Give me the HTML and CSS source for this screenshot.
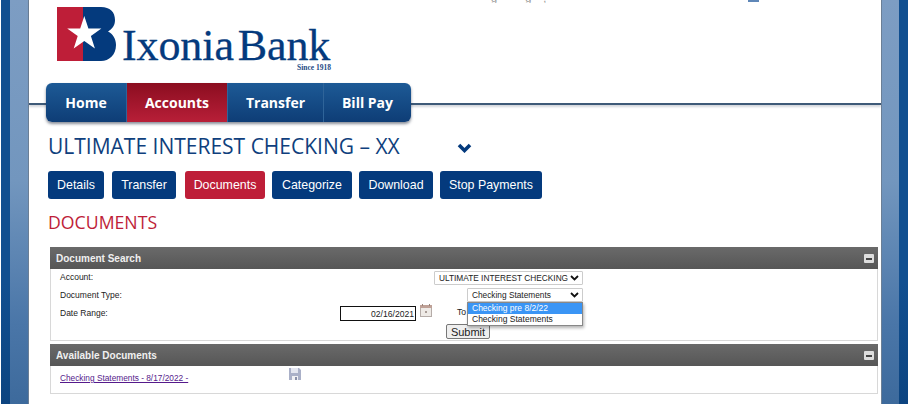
FILE: index.html
```html
<!DOCTYPE html>
<html lang="en">
<head>
  <meta charset="UTF-8" />
  <title>Ixonia Bank - Documents</title>
  <link rel="stylesheet" href="styles.css">
</head>
<body>
  <div class="page">
    <div class="rail-dark rail-left"></div>
    <div class="rail-light rail-light-left"></div>

    <div class="sheet">
      <!-- Header -->
      <header class="site-header">
        <div class="util-row">
          <span class="util-text">g</span>
          <span class="util-text">g</span>
          <span class="util-text util-comma">,</span>
          <span class="util-icon"></span>
        </div>
        <div class="logo">
          <svg class="logo-mark" width="60" height="54" viewBox="0 0 60 54">
            <rect x="0" y="0" width="26" height="54" fill="#be1e38"></rect>
            <path d="M26 0H44C53 0 58 5 58 13C58 19 55 22 51 24.5C56 27 59 32 59 38C59 48 52 54 44 54H26Z" fill="#043a7d"></path>
            <path d="M27.3 9L31.4 21.4H44.4L33.9 29.1L37.9 41.6L27.3 33.9L16.7 41.6L20.7 29.1L10.2 21.4H23.2Z" fill="#fff"></path>
          </svg>
          <div class="logo-text">
            <div class="logo-name">Ixonia Bank</div>
            <div class="logo-since">Since 1918</div>
          </div>
        </div>
        <nav class="main-nav">
          <a class="nav-item nav-home">Home</a>
          <a class="nav-item nav-accounts active">Accounts</a>
          <a class="nav-item nav-transfer">Transfer</a>
          <a class="nav-item nav-billpay">Bill Pay</a>
        </nav>
      </header>

      <!-- Main Content -->
      <main class="content">
        <div class="account-title">
          <h1>ULTIMATE INTEREST CHECKING – XX</h1>
          <svg class="title-chevron" width="15" height="10" viewBox="0 0 15 10">
            <path d="M2 2L7.5 7.5L13 2" fill="none" stroke="#043a7d" stroke-width="3.6"></path>
          </svg>
        </div>

        <div class="tabs">
          <a class="tab tab-details">Details</a>
          <a class="tab tab-transfer">Transfer</a>
          <a class="tab tab-documents active">Documents</a>
          <a class="tab tab-categorize">Categorize</a>
          <a class="tab tab-download">Download</a>
          <a class="tab tab-stop">Stop Payments</a>
        </div>

        <h2>DOCUMENTS</h2>

        <section class="panel panel-search">
          <div class="panel-header">
            <span>Document Search</span>
            <span class="collapse-btn"></span>
          </div>
          <div class="panel-body">
            <div class="form-row row-account">
              <label class="field-label label-account">Account:</label>
              <div class="fake-select select-account">
                <span>ULTIMATE INTEREST CHECKING</span>
                <svg class="select-arrow" width="9" height="6" viewBox="0 0 9 6"><path d="M1 1L4.5 4.5L8 1" fill="none" stroke="#111" stroke-width="1.8"></path></svg>
              </div>
            </div>
            <div class="form-row row-type">
              <label class="field-label label-type">Document Type:</label>
              <div class="type-wrap">
                <div class="fake-select select-type">
                  <span>Checking Statements</span>
                  <svg class="select-arrow" width="9" height="6" viewBox="0 0 9 6"><path d="M1 1L4.5 4.5L8 1" fill="none" stroke="#111" stroke-width="1.8"></path></svg>
                </div>
                <ul class="dropdown">
                  <li class="selected">Checking pre 8/2/22</li>
                  <li>Checking Statements</li>
                </ul>
              </div>
            </div>
            <div class="form-row row-date">
              <label class="field-label label-date">Date Range:</label>
              <div class="date-input">02/16/2021</div>
              <svg class="calendar-icon" width="12" height="13" viewBox="0 0 12 13">
                <rect x="0.5" y="1.5" width="11" height="11" fill="#eeeae6" stroke="#b5aca8"></rect>
                <rect x="0" y="1" width="12" height="3" fill="#bfa197"></rect>
                <rect x="2" y="0" width="1" height="2" fill="#9a8378"></rect>
                <rect x="9" y="0" width="1" height="2" fill="#9a8378"></rect>
                <rect x="5" y="7" width="2" height="2" fill="#a89c96"></rect>
              </svg>
              <span class="to-label">To</span>
            </div>
            <div class="form-row row-submit">
              <button class="submit-btn">Submit</button>
            </div>
          </div>
        </section>

        <section class="panel panel-results">
          <div class="panel-header">
            <span>Available Documents</span>
            <span class="collapse-btn"></span>
          </div>
          <div class="panel-body results-body">
            <a class="doc-link">Checking Statements - 8/17/2022 -</a>
            <svg class="save-icon" width="12" height="12" viewBox="0 0 12 12">
              <path d="M0 0H10L12 2V12H0Z" fill="#aab0c8"></path>
              <rect x="2" y="0" width="7" height="5" fill="#e4e6f0"></rect>
              <rect x="3" y="8" width="6" height="4" fill="#f0f0f4"></rect>
              <rect x="6" y="9" width="2" height="3" fill="#8a90a8"></rect>
            </svg>
          </div>
        </section>
      </main>
    </div>

    <div class="rail-light rail-light-right"></div>
    <div class="rail-dark rail-right"></div>
  </div>
</body>
</html>
```

FILE: styles.css
```css
:root {
  --navy: #043a7d;
  --red: #be1e38;
  --panel-border: #d8d8d8;
}

* {
  box-sizing: border-box;
  margin: 0;
  padding: 0;
}

html, body {
  height: 404px;
  overflow: hidden;
}

body {
  font-family: 'Liberation Sans', Arial, sans-serif;
  background-color: #fff;
  color: #222;
}

.page {
  display: flex;
  width: 908px;
  height: 404px;
  overflow: hidden;
}

/* Side rails */
.rail-dark {
  width: 9px;
  background: linear-gradient(to bottom, #114f90 0%, #114f90 70%, #0c4480 100%);
}

.rail-left {
  margin-left: 1px;
}

.rail-light {
  width: 19px;
  background: linear-gradient(to bottom, #7d9dc3 0%, #7296be 45%, #4a76a8 80%, #3d6a9c 100%);
}

.rail-light-left {
  border-right: 1px solid #6b7f96;
}

.rail-light-right {
  width: 18px;
  border-left: 1px solid #6b7f96;
}

.sheet {
  width: 852px;
  background-color: #fff;
}

/* Header */
.site-header {
  height: 105px;
  border-bottom: 2px solid #3e5a78;
  box-shadow: 0 2px 2px rgba(80, 90, 110, 0.25);
}

.util-row {
  display: flex;
  height: 3px;
  overflow: hidden;
  padding-left: 462px;
  font-size: 11px;
  line-height: 3px;
  color: #999;
}

.util-text {
  margin-right: 28px;
  margin-top: -3px;
}

.util-comma {
  margin-left: -16px;
}

.util-icon {
  width: 11px;
  height: 2px;
  margin-left: 174px;
  background-color: #5f87b8;
}

.logo {
  display: flex;
  height: 67px;
  margin: 4px 0 0 28px;
}

.logo-mark {
  flex-shrink: 0;
}

.logo-text {
  margin: 18px 0 0 5px;
  width: 209px;
}

.logo-name {
  height: 39px;
  font-family: 'Liberation Serif', 'Times New Roman', serif;
  font-size: 44px;
  line-height: 42px;
  color: var(--navy);
  word-spacing: -7px;
  letter-spacing: -0.1px;
  white-space: nowrap;
  -webkit-text-stroke: 0.3px var(--navy);
}

.logo-since {
  font-family: 'Liberation Serif', 'Times New Roman', serif;
  font-size: 7.5px;
  font-weight: bold;
  line-height: 8px;
  text-align: right;
  color: #1d4a85;
}

.main-nav {
  display: flex;
  width: 365px;
  height: 39px;
  margin: 9px 0 0 17px;
  border-radius: 6px;
  overflow: hidden;
  background: linear-gradient(to bottom, #1d5a96, #0e3d76);
  box-shadow: 0 2px 3px rgba(40, 50, 70, 0.55);
  position: relative;
}

.nav-item {
  display: flex;
  align-items: center;
  justify-content: center;
  font-family: 'Open Sans', sans-serif;
  font-size: 14px;
  font-weight: 700;
  color: #fff;
  border-right: 1px solid #2f6499;
}

.nav-home { width: 81px; }
.nav-accounts { width: 101px; }
.nav-transfer { width: 96px; }
.nav-billpay { width: 87px; border-right: none; }

.nav-item.active {
  background: linear-gradient(to bottom, #8b0d20, #b81f38);
}

/* Main Content */
.content {
  padding: 28px 0 0 19px;
}

.account-title {
  display: flex;
  align-items: center;
  height: 26px;
}

h1 {
  width: 409px;
  font-family: 'Open Sans', sans-serif;
  font-size: 21px;
  font-weight: 400;
  color: #0f3f7d;
  white-space: nowrap;
}

.title-chevron {
  margin-top: 4px;
}

.tabs {
  display: flex;
  margin-top: 12px;
}

.tab {
  display: flex;
  align-items: center;
  justify-content: center;
  height: 28px;
  font-size: 12.4px;
  color: #fff;
  background-color: var(--navy);
  border-radius: 3px;
}

.tab.active {
  background-color: var(--red);
}

.tab-details { width: 56px; margin-right: 8px; }
.tab-transfer { width: 64px; margin-right: 9px; }
.tab-documents { width: 80px; margin-right: 7px; }
.tab-categorize { width: 80px; margin-right: 7px; }
.tab-download { width: 74px; margin-right: 7px; }
.tab-stop { width: 102px; }

h2 {
  margin-top: 11px;
  font-family: 'Open Sans', sans-serif;
  font-size: 17.7px;
  font-weight: 400;
  line-height: 24px;
  color: var(--red);
}

.panel {
  width: 828px;
  margin-left: 2px;
  border: 1px solid var(--panel-border);
  border-top: none;
}

.panel-search {
  height: 94px;
  margin-top: 13px;
}

.panel-results {
  height: 50px;
  margin-top: 3px;
}

.panel-header {
  display: flex;
  align-items: center;
  justify-content: space-between;
  height: 22px;
  padding: 0 4px 0 6px;
  font-size: 10px;
  font-weight: bold;
  color: #f0f0f0;
  background: linear-gradient(to bottom, #6a6a6a, #565656);
  margin: 0 -1px;
}

.collapse-btn {
  position: relative;
  width: 10px;
  height: 9px;
  background-color: #ddd;
  border-radius: 1px;
}

.collapse-btn::after {
  content: '';
  position: absolute;
  left: 2px;
  top: 4px;
  width: 6px;
  height: 2px;
  background-color: #444;
}

.panel-body {
  font-size: 8.5px;
  color: #222;
}

.form-row {
  display: flex;
  align-items: flex-start;
}

.field-label {
  padding-left: 9px;
  line-height: 12px;
  white-space: nowrap;
}

.row-account { height: 19px; padding-top: 2px; }
.row-type { height: 17px; }
.row-date { height: 19px; }
.row-submit { height: 17px; padding-left: 395px; }

.label-account { width: 383px; }
.label-type { width: 416px; padding-top: 1px; }
.label-date { width: 289px; padding-top: 2px; }

.fake-select {
  display: flex;
  align-items: center;
  justify-content: space-between;
  height: 14px;
  padding: 0 3px 0 4px;
  font-size: 8.3px;
  background-color: #fff;
  border: 1px solid #ccc;
  border-radius: 1px;
  white-space: nowrap;
}

.select-account { width: 149px; }
.select-type { width: 116px; }

.type-wrap {
  position: relative;
  width: 116px;
}

.dropdown {
  position: absolute;
  left: 0;
  top: 14px;
  width: 116px;
  list-style: none;
  background-color: #fff;
  border: 1px solid #888;
  box-shadow: 1px 2px 3px rgba(0, 0, 0, 0.3);
  font-size: 8.5px;
  line-height: 11px;
  z-index: 10;
}

.dropdown li {
  padding-left: 4px;
  white-space: nowrap;
}

.dropdown .selected {
  background-color: #3a95f5;
  color: #fff;
}

.date-input {
  width: 76px;
  height: 15px;
  padding-right: 1px;
  font-size: 8.6px;
  line-height: 14px;
  text-align: right;
  border: 2px solid #111;
  border-width: 1.5px 1px 1px 1.5px;
  margin-top: 1px;
}

.calendar-icon {
  margin: -1px 0 0 4px;
}

.to-label {
  margin: 2px 0 0 25px;
  font-size: 8.6px;
}

.submit-btn {
  width: 44px;
  height: 15px;
  font-family: 'Liberation Sans', Arial, sans-serif;
  font-size: 11px;
  line-height: 12px;
  color: #222;
  background-color: #efefef;
  border: 1px solid #777;
  border-radius: 2px;
}

.results-body {
  display: flex;
  align-items: flex-start;
  padding: 5px 0 0 9px;
}

.doc-link {
  width: 229px;
  margin-top: 1px;
  font-size: 8.3px;
  line-height: 12px;
  color: #551a8b;
  text-decoration: underline;
}

.save-icon {
  margin-top: -3px;
}
```
